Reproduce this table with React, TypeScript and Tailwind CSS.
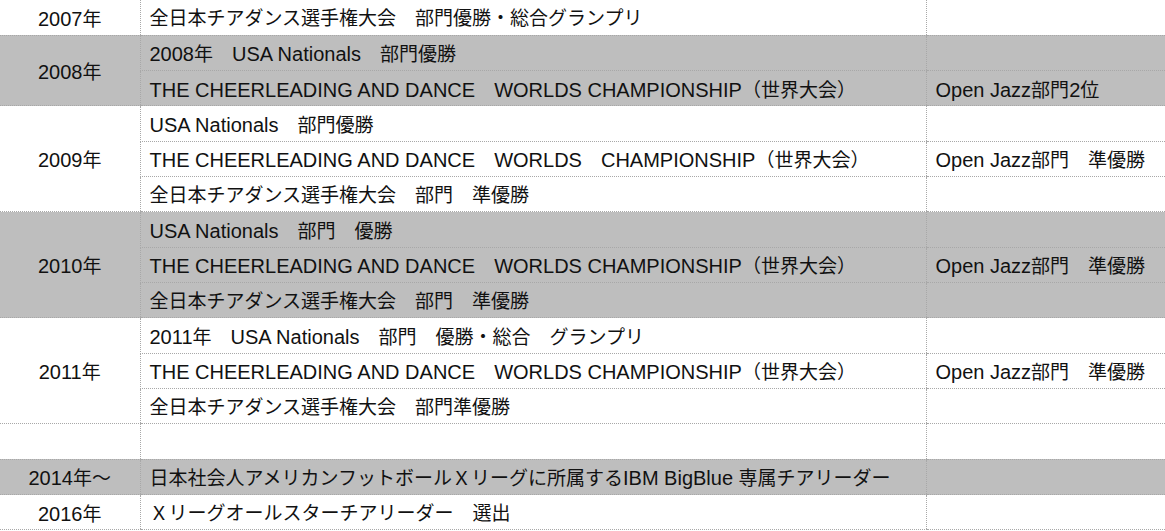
import React from "react";

type Sub = { text: string; result?: string };
type Group = { year: string; gray: boolean; subs: Sub[] };

const W = "THE CHEERLEADING AND DANCE　WORLDS CHAMPIONSHIP（世界大会）";

const groups: Group[] = [
  { year: "2007年", gray: false, subs: [{ text: "全日本チアダンス選手権大会　部門優勝・総合グランプリ" }] },
  {
    year: "2008年",
    gray: true,
    subs: [
      { text: "2008年　USA Nationals　部門優勝" },
      { text: W, result: "Open Jazz部門2位" },
    ],
  },
  {
    year: "2009年",
    gray: false,
    subs: [
      { text: "USA Nationals　部門優勝" },
      { text: "THE CHEERLEADING AND DANCE　WORLDS　CHAMPIONSHIP（世界大会）", result: "Open Jazz部門　準優勝" },
      { text: "全日本チアダンス選手権大会　部門　準優勝" },
    ],
  },
  {
    year: "2010年",
    gray: true,
    subs: [
      { text: "USA Nationals　部門　優勝" },
      { text: W, result: "Open Jazz部門　準優勝" },
      { text: "全日本チアダンス選手権大会　部門　準優勝" },
    ],
  },
  {
    year: "2011年",
    gray: false,
    subs: [
      { text: "2011年　USA Nationals　部門　優勝・総合　グランプリ" },
      { text: W, result: "Open Jazz部門　準優勝" },
      { text: "全日本チアダンス選手権大会　部門準優勝" },
    ],
  },
  { year: "", gray: false, subs: [{ text: "" }] },
  {
    year: "2014年〜",
    gray: true,
    subs: [{ text: "日本社会人アメリカンフットボールＸリーグに所属するIBM BigBlue 専属チアリーダー" }],
  },
  { year: "2016年", gray: false, subs: [{ text: "Ｘリーグオールスターチアリーダー　選出" }] },
];

function Mixed({ text }: { text: string }) {
  const parts = text.split(/([\x20-\x7e]+)/).filter((p) => p.length > 0);
  return (
    <>
      {parts.map((p, i) =>
        /^[\x20-\x7e]+$/.test(p) ? (
          <span key={i} className="text-[20px]">
            {p}
          </span>
        ) : (
          <span key={i}>{p}</span>
        )
      )}
    </>
  );
}

export default function App() {
  return (
    <div
      className="w-[1165px] h-[531px] overflow-hidden bg-white text-[#111] text-[19px] leading-none"
      style={{ fontFamily: '"Liberation Sans", "Noto Sans CJK JP", sans-serif' }}
    >
      <table className="w-[1165px] table-fixed border-collapse">
        <colgroup>
          <col className="w-[140px]" />
          <col className="w-[786px]" />
          <col />
        </colgroup>
        <tbody>
          {groups.map((g, gi) =>
            g.subs.map((s, si) => (
              <tr key={`${gi}-${si}`} className={`h-[35.33px] ${g.gray ? "bg-[#bebebe]" : "bg-white"}`}>
                {si === 0 && (
                  <td
                    rowSpan={g.subs.length}
                    className="p-0 pt-[3px] text-center align-middle whitespace-nowrap border-b border-dotted border-[#a8a8a8]"
                  >
                    <Mixed text={g.year} />
                  </td>
                )}
                <td className="pl-[9px] pr-0 pb-0 pt-[3px] align-middle whitespace-nowrap border-l border-b border-dotted border-[#a8a8a8]">
                  <Mixed text={s.text} />
                </td>
                <td className="pl-[9px] pr-0 pb-0 pt-[3px] align-middle whitespace-nowrap border-l border-b border-dotted border-[#a8a8a8]">
                  <Mixed text={s.result ?? ""} />
                </td>
              </tr>
            ))
          )}
        </tbody>
      </table>
    </div>
  );
}
